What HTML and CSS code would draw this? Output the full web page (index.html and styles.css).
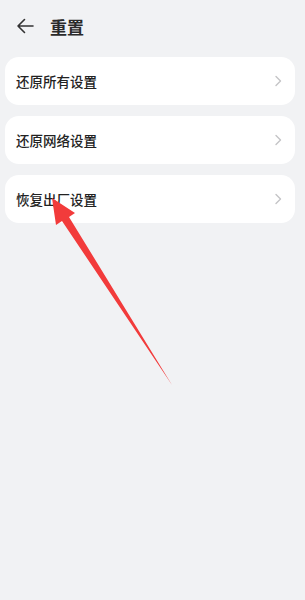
FILE: index.html
```html
<!DOCTYPE html>
<html lang="zh">
<head>
    <meta charset="UTF-8">
    <meta name="viewport" content="width=device-width, initial-scale=1">
    <title>重置</title>
    <link rel="stylesheet" href="styles.css">
</head>
<body>
    <div class="page">
        <div class="top-bar">
            <svg class="back" width="20" height="20" viewBox="0 0 20 20">
                <path d="M18 10H3M9.5 3.5L3 10l6.5 6.5" fill="none" stroke="#333" stroke-width="1.6" stroke-linecap="round" stroke-linejoin="round"/>
            </svg>
            <span class="title">重置</span>
        </div>

        <div class="list">
            <div class="item">
                <span class="item-text">还原所有设置</span>
                <svg class="chev" width="8" height="12" viewBox="0 0 8 12"><path d="M2 1.5l4.5 4.5L2 10.5" fill="none" stroke="#c4c4c6" stroke-width="1.4" stroke-linecap="round" stroke-linejoin="round"/></svg>
            </div>
            <div class="item">
                <span class="item-text">还原网络设置</span>
                <svg class="chev" width="8" height="12" viewBox="0 0 8 12"><path d="M2 1.5l4.5 4.5L2 10.5" fill="none" stroke="#c4c4c6" stroke-width="1.4" stroke-linecap="round" stroke-linejoin="round"/></svg>
            </div>
            <div class="item">
                <span class="item-text">恢复出厂设置</span>
                <svg class="chev" width="8" height="12" viewBox="0 0 8 12"><path d="M2 1.5l4.5 4.5L2 10.5" fill="none" stroke="#c4c4c6" stroke-width="1.4" stroke-linecap="round" stroke-linejoin="round"/></svg>
            </div>
        </div>

        <!-- red pointer drawn over the screenshot -->
        <svg class="pointer" width="305" height="600" viewBox="0 0 305 600">
            <polygon points="52,198 75,213 69,217 172,385 62,221 56,225" fill="#f23b3b"/>
        </svg>
    </div>
</body>
</html>
```

FILE: styles.css
```css
* {
    margin: 0;
    padding: 0;
    box-sizing: border-box;
}

body {
    background-color: #f1f2f4;
    font-family: "Noto Sans CJK SC", "Noto Sans", sans-serif;
    color: #222;
}

.page {
    position: relative;
    width: 305px;
    height: 600px;
}

.top-bar {
    display: flex;
    align-items: center;
    height: 52px;
    padding-left: 15px;
    padding-bottom: 0;
}

.back {
    display: block;
}

.title {
    margin-left: 15px;
    font-size: 17px;
    font-weight: 700;
    color: #2a2a2a;
}

.list {
    display: flex;
    flex-direction: column;
    gap: 11px;
    padding: 5px 10px 0 5px;
}

.item {
    display: flex;
    align-items: center;
    justify-content: space-between;
    height: 48px;
    background-color: #ffffff;
    border-radius: 14px;
    padding: 0 13px 0 11px;
}

.item-text {
    font-size: 13.5px;
    font-weight: 500;
    color: #222;
}

.chev {
    display: block;
}

.pointer {
    position: absolute;
    left: 0;
    top: 0;
}
```
